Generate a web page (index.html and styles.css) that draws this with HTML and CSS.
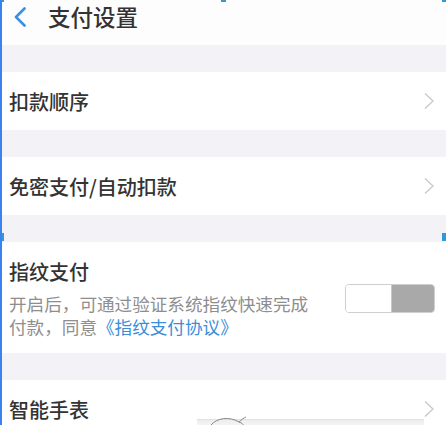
FILE: index.html
```html
<!DOCTYPE html>
<html lang="zh-CN">
<head>
<meta charset="utf-8">
<link rel="stylesheet" href="styles.css">
</head>
<body>
<div class="screen">
  <header class="nav">
    <svg class="back" width="16" height="20" viewBox="0 0 16 20"><path d="M12.5 1.5 L4 10 L12.5 18.5" fill="none" stroke="#3b8fe0" stroke-width="2.6" stroke-linecap="round" stroke-linejoin="round"/></svg>
    <span class="title">支付设置</span>
  </header>
  <div class="gap"></div>
  <div class="row"><span class="label">扣款顺序</span><svg class="chev" width="12" height="18" viewBox="0 0 12 18"><path d="M2 1.5 L10 9 L2 16.5" fill="none" stroke="#c9c9ce" stroke-width="1.4"/></svg></div>
  <div class="gap"></div>
  <div class="row"><span class="label">免密支付/自动扣款</span><svg class="chev" width="12" height="18" viewBox="0 0 12 18"><path d="M2 1.5 L10 9 L2 16.5" fill="none" stroke="#c9c9ce" stroke-width="1.4"/></svg></div>
  <div class="gap"></div>
  <div class="finger">
    <div class="finger-text">
      <div class="label">指纹支付</div>
      <p class="desc">开启后，可通过验证系统指纹快速完成<br>付款，同意<span class="link">《指纹支付协议》</span></p>
    </div>
    <div class="toggle"><span class="knob"></span><span class="track"></span></div>
  </div>
  <div class="gap"></div>
  <div class="row"><span class="label">智能手表</span><svg class="chev" width="12" height="18" viewBox="0 0 12 18"><path d="M2 1.5 L10 9 L2 16.5" fill="none" stroke="#c9c9ce" stroke-width="1.4"/></svg></div>
  <div class="overlay">
    <svg width="40" height="10" viewBox="0 0 40 10"><path d="M2 9 C8 2 20 0 30 6 M30 6 C33 3 35 2 37 1 M30 6 C33 7 34 8 35 10" fill="none" stroke="#888" stroke-width="1"/></svg>
  </div>
  <span class="mark mark-tl"></span>
  <span class="mark mark-tm"></span>
  <span class="mark mark-tr"></span>
  <span class="mark mark-ml"></span>
  <span class="mark mark-mr"></span>
</div>
</body>
</html>
```

FILE: styles.css
```css
html, body {
  margin: 0;
  padding: 0;
  background: #fff;
}
.screen {
  position: relative;
  width: 446px;
  height: 425px;
  overflow: hidden;
  background: #f3f3f7;
  font-family: "Noto Sans CJK SC", "Noto Sans", sans-serif;
  color: #333;
  border-left: 2px solid #3b82f0;
  box-sizing: border-box;
}
.nav {
  height: 45px;
  background: #fdfdfd;
  display: flex;
  align-items: center;
  padding-left: 10px;
  box-sizing: border-box;
}
.back {
  margin-top: -12px;
}
.title {
  font-size: 22.5px;
  font-weight: 500;
  margin-left: 20px;
  margin-top: -13px;
  color: #333;
}
.gap {
  height: 27px;
}
.row {
  height: 58px;
  background: #fff;
  display: flex;
  align-items: center;
  justify-content: space-between;
  padding: 0 11px 0 7px;
}
.label {
  font-size: 20px;
  font-weight: 500;
  color: #333;
}
.chev {
  display: block;
}
.finger {
  height: 111px;
  background: #fff;
  display: flex;
  align-items: center;
  justify-content: space-between;
  padding: 0 11px 0 7px;
}
.finger-text {
  width: 320px;
}
.finger .label {
  line-height: 28px;
}
.desc {
  margin: 6px 0 0;
  font-size: 17.6px;
  line-height: 23px;
  color: #8e8e8e;
  white-space: nowrap;
}
.link {
  color: #3a8fd8;
}
.toggle {
  display: flex;
  width: 90px;
  height: 29px;
  border: 1.5px solid #cfcfcf;
  border-radius: 4px;
  overflow: hidden;
  box-sizing: border-box;
  margin-top: 2px;
}
.knob {
  width: 45px;
  background: #fff;
  border-right: 1px solid #c8c8c8;
}
.track {
  flex: 1;
  background: #a9a9a9;
}
.overlay {
  position: absolute;
  left: 195px;
  top: 419px;
  width: 227px;
  height: 8px;
  background: linear-gradient(#ededed, #f8f8f8);
  border-top: 1px solid #e0e0e0;
}
.overlay svg {
  position: absolute;
  left: 12px;
  top: -4px;
}
.mark {
  position: absolute;
  background: #2f9ad6;
}
.mark-tl { left: -2px; top: 0; width: 4px; height: 2px; }
.mark-tm { left: 219px; top: 0; width: 5px; height: 2px; }
.mark-tr { left: 440px; top: 0; width: 4px; height: 2px; }
.mark-ml { left: -2px; top: 233px; width: 4px; height: 8px; }
.mark-mr { left: 440px; top: 233px; width: 4px; height: 8px; }
```
